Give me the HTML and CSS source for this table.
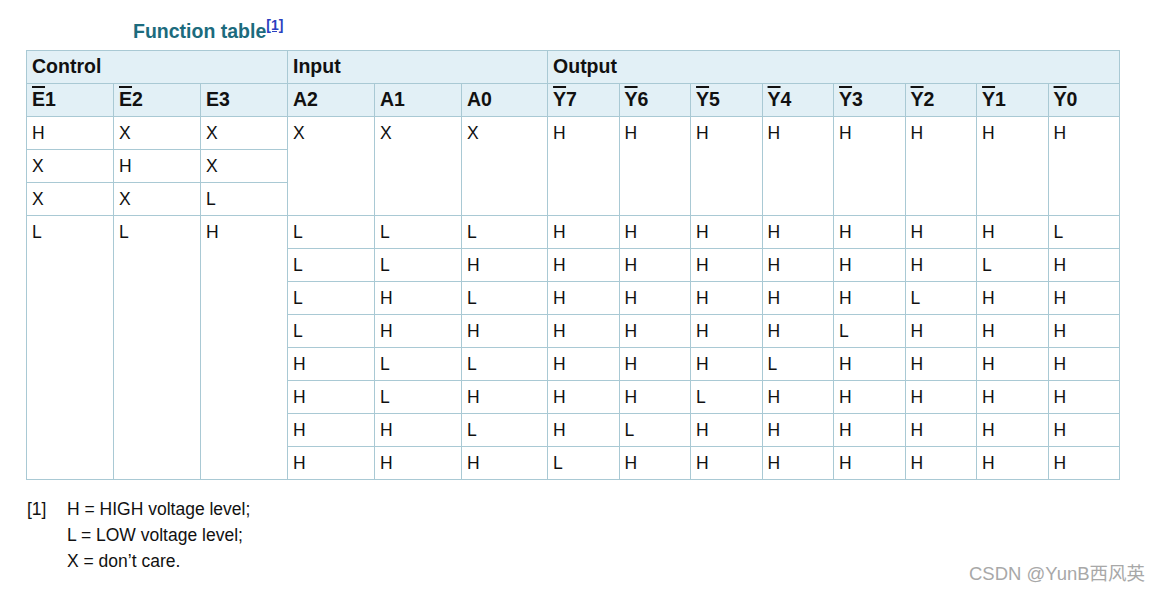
FILE: index.html
```html
<!DOCTYPE html>
<html>
<head>
<meta charset="utf-8">
<link rel="stylesheet" href="styles.css">
</head>
<body>
<div class="page">
  <h2 class="title">Function table<a class="ref" href="#n1">[1]</a></h2>
  <table class="ft">
    <colgroup>
      <col class="c87"><col class="c87"><col class="c87">
      <col class="c87"><col class="c87"><col class="c86">
      <col class="cy"><col class="cy"><col class="cy"><col class="cy">
      <col class="cy"><col class="cy"><col class="cy"><col class="cy">
    </colgroup>
    <thead>
      <tr><th colspan="3">Control</th><th colspan="3">Input</th><th colspan="8">Output</th></tr>
      <tr>
        <th><span class="ob">E</span>1</th><th><span class="ob">E</span>2</th><th>E3</th>
        <th>A2</th><th>A1</th><th>A0</th>
        <th><span class="ob">Y</span>7</th><th><span class="ob">Y</span>6</th><th><span class="ob">Y</span>5</th><th><span class="ob">Y</span>4</th>
        <th><span class="ob">Y</span>3</th><th><span class="ob">Y</span>2</th><th><span class="ob">Y</span>1</th><th><span class="ob">Y</span>0</th>
      </tr>
    </thead>
    <tbody>
      <tr><td>H</td><td>X</td><td>X</td><td rowspan="3">X</td><td rowspan="3">X</td><td rowspan="3">X</td>
        <td rowspan="3">H</td><td rowspan="3">H</td><td rowspan="3">H</td><td rowspan="3">H</td><td rowspan="3">H</td><td rowspan="3">H</td><td rowspan="3">H</td><td rowspan="3">H</td></tr>
      <tr><td>X</td><td>H</td><td>X</td></tr>
      <tr><td>X</td><td>X</td><td>L</td></tr>
      <tr><td rowspan="8">L</td><td rowspan="8">L</td><td rowspan="8">H</td>
        <td>L</td><td>L</td><td>L</td><td>H</td><td>H</td><td>H</td><td>H</td><td>H</td><td>H</td><td>H</td><td>L</td></tr>
      <tr><td>L</td><td>L</td><td>H</td><td>H</td><td>H</td><td>H</td><td>H</td><td>H</td><td>H</td><td>L</td><td>H</td></tr>
      <tr><td>L</td><td>H</td><td>L</td><td>H</td><td>H</td><td>H</td><td>H</td><td>H</td><td>L</td><td>H</td><td>H</td></tr>
      <tr><td>L</td><td>H</td><td>H</td><td>H</td><td>H</td><td>H</td><td>H</td><td>L</td><td>H</td><td>H</td><td>H</td></tr>
      <tr><td>H</td><td>L</td><td>L</td><td>H</td><td>H</td><td>H</td><td>L</td><td>H</td><td>H</td><td>H</td><td>H</td></tr>
      <tr><td>H</td><td>L</td><td>H</td><td>H</td><td>H</td><td>L</td><td>H</td><td>H</td><td>H</td><td>H</td><td>H</td></tr>
      <tr><td>H</td><td>H</td><td>L</td><td>H</td><td>L</td><td>H</td><td>H</td><td>H</td><td>H</td><td>H</td><td>H</td></tr>
      <tr><td>H</td><td>H</td><td>H</td><td>L</td><td>H</td><td>H</td><td>H</td><td>H</td><td>H</td><td>H</td><td>H</td></tr>
    </tbody>
  </table>
  <div class="notes" id="n1">
    <span class="num">[1]</span>
    <div class="lines">
      <div>H = HIGH voltage level;</div>
      <div>L = LOW voltage level;</div>
      <div>X = don’t care.</div>
    </div>
  </div>
</div>
<div class="wm">CSDN @YunB西风英</div>
</body>
</html>
```
FILE: styles.css
```css
html, body {
  margin: 0;
  padding: 0;
  background: #ffffff;
}
body {
  font-family: "Liberation Sans", Arial, "Noto Sans CJK SC", sans-serif;
  color: #111;
  width: 1160px;
  height: 590px;
  position: relative;
  overflow: hidden;
}
.page {
  padding: 18px 0 0 26px;
}
.title {
  margin: 0 0 5px 107px;
  font-size: 19.5px;
  line-height: 27px;
  font-weight: bold;
  color: #1c6b7d;
}
.ref {
  font-size: 14px;
  font-weight: bold;
  color: #2a3fc0;
  text-decoration: underline;
  vertical-align: 8px;
  line-height: 0;
}
.ft {
  border-collapse: collapse;
  table-layout: fixed;
  width: 1094px;
  border: 1px solid #a9c9d4;
}
.c87 { width: 87px; }
.c86 { width: 86px; }
.cy { width: 71.5px; }
.ft th, .ft td {
  border: 1px solid #a9c9d4;
  text-align: left;
  vertical-align: top;
  padding: 4px 5px;
  height: 24px;
  line-height: 24px;
}
.ft th {
  background: #e2f0f6;
  font-size: 19.5px;
  font-weight: bold;
  padding-top: 3px;
  padding-bottom: 5px;
}
.ft td {
  font-size: 17.5px;
  font-weight: normal;
}
.ob {
  text-decoration: overline;
  text-decoration-thickness: 2px;
}
.notes {
  display: flex;
  margin-top: 16px;
  font-size: 17.5px;
  line-height: 26px;
}
.num {
  width: 40px;
  padding-left: 1px;
}
.wm {
  position: absolute;
  left: 969px;
  top: 559px;
  font-size: 18.5px;
  color: #a8a8a8;
  font-family: "Liberation Sans", "Noto Sans CJK SC", sans-serif;
}
```
